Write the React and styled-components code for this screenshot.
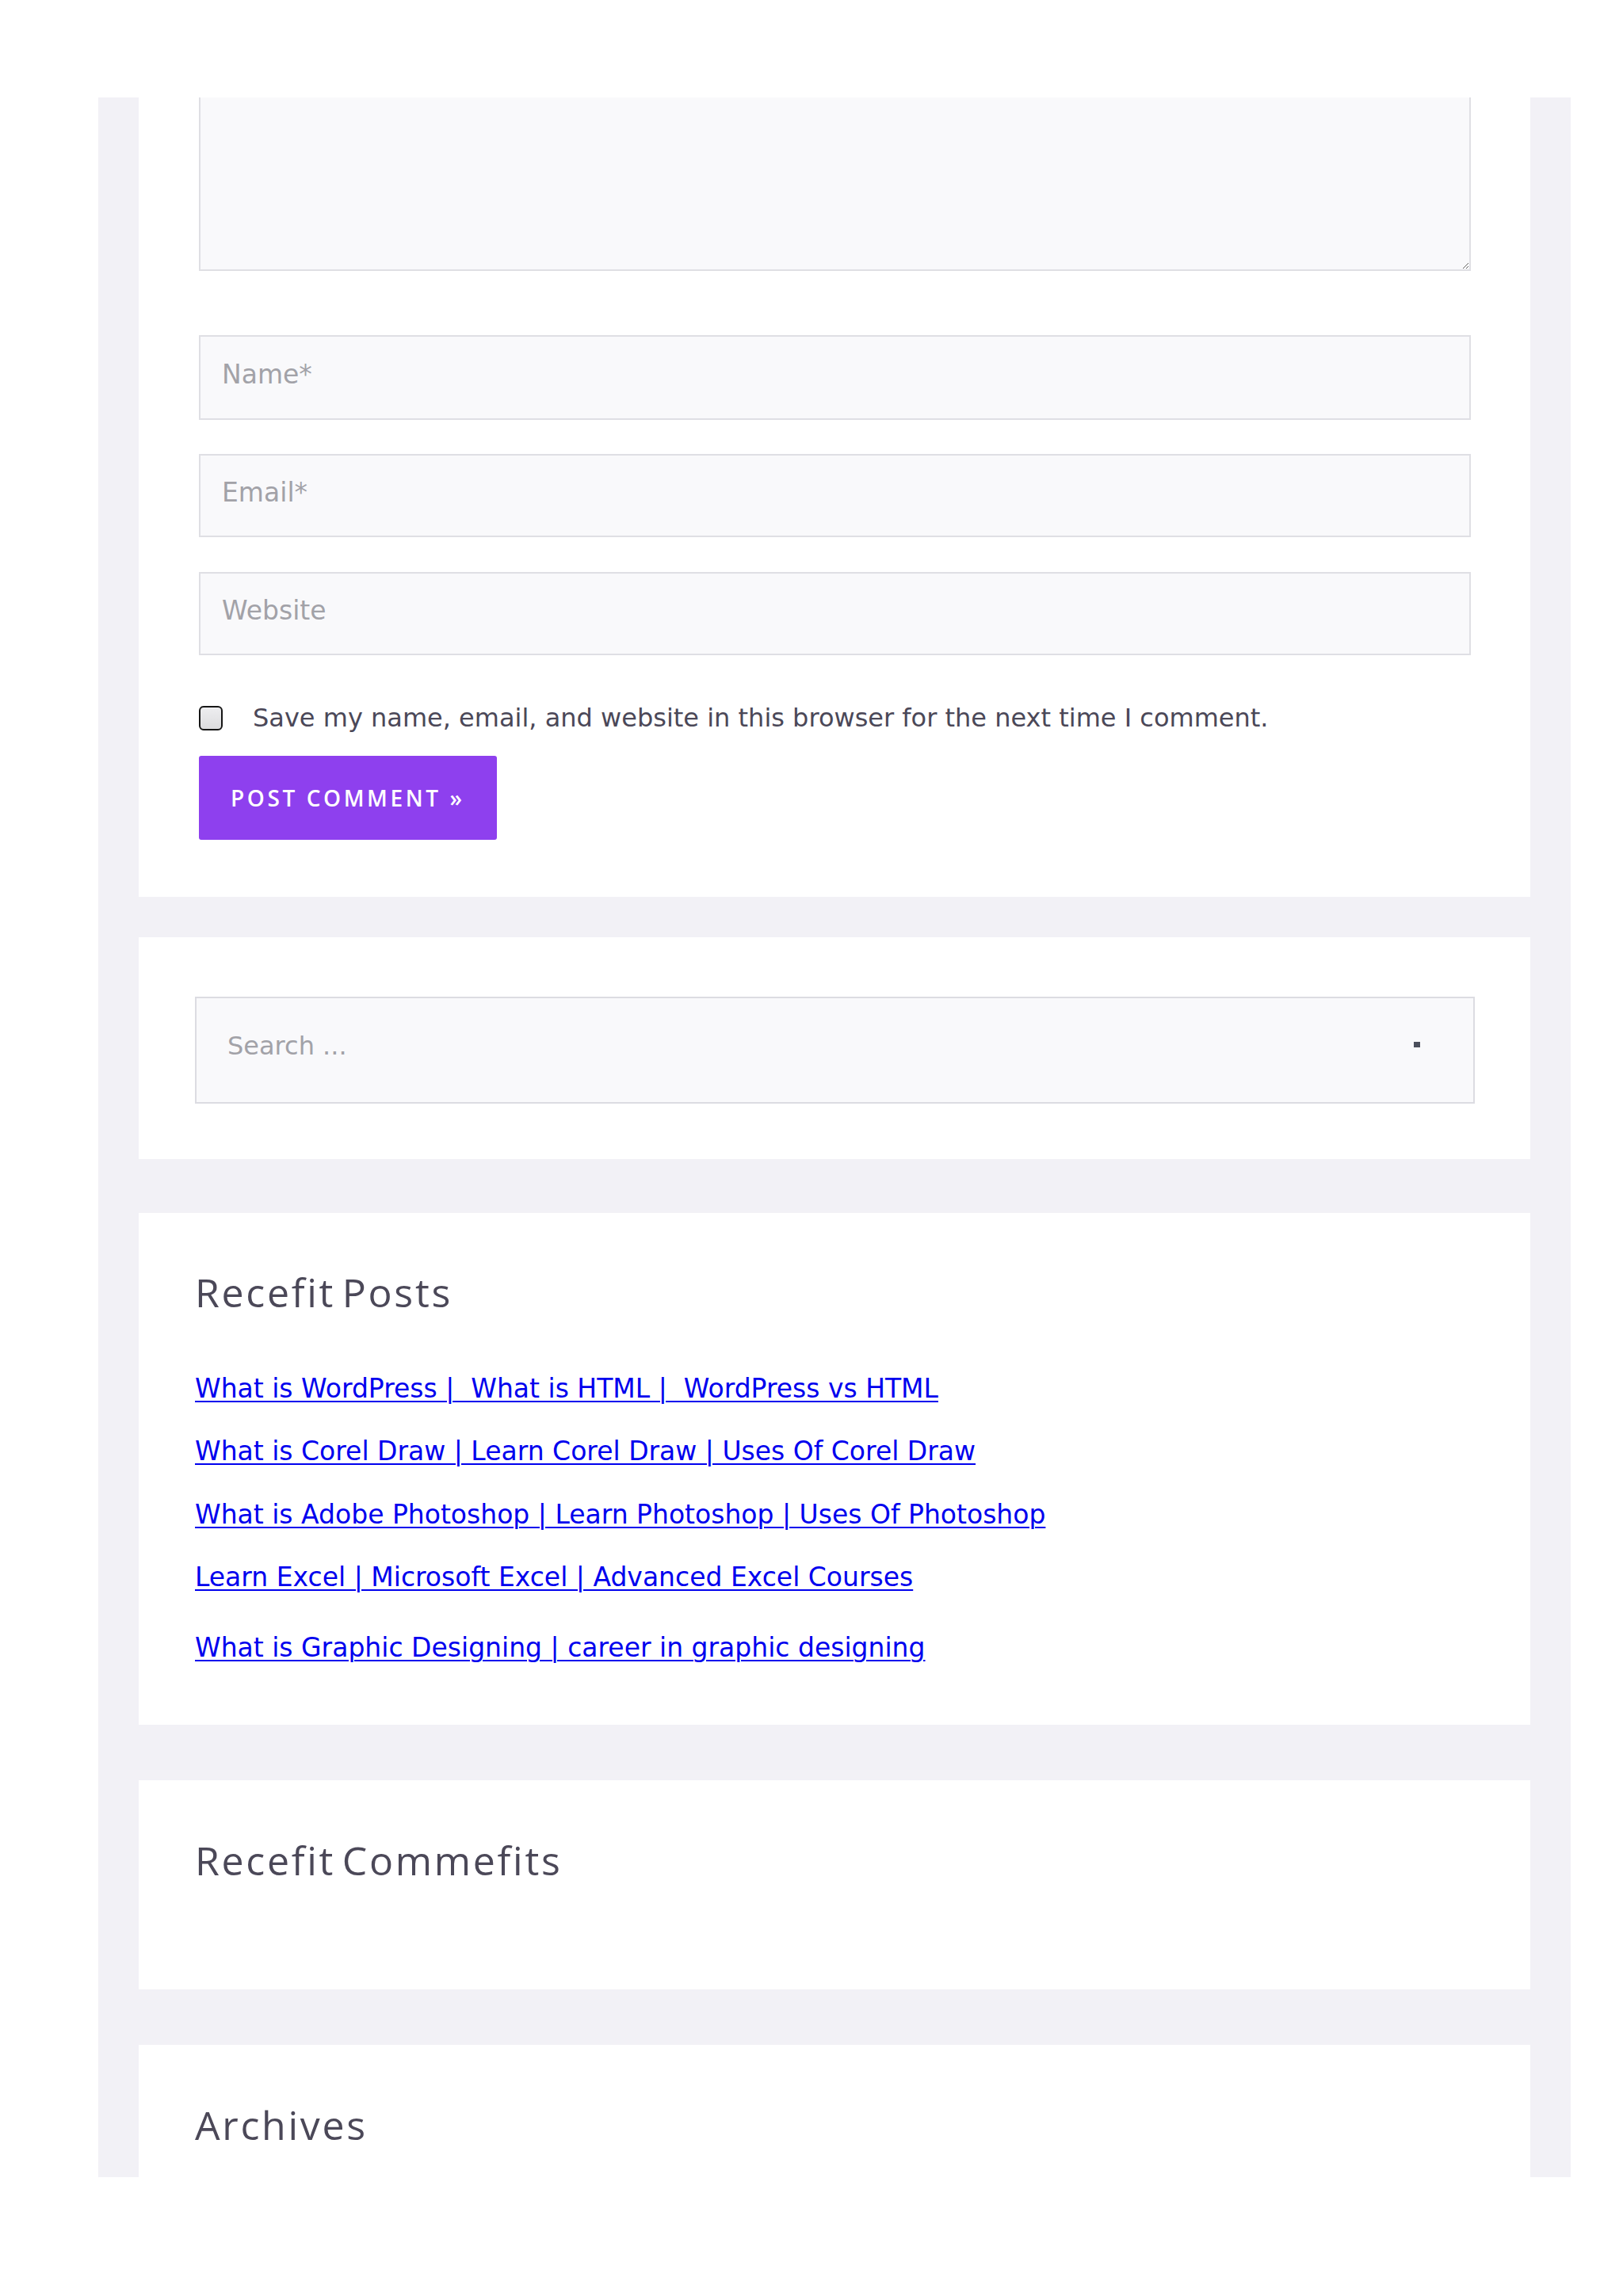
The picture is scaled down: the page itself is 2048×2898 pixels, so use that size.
import React from "react";
import styled, { createGlobalStyle } from "styled-components";

const Global = createGlobalStyle`
  html, body { margin: 0; padding: 0; background: #ffffff; }
  body { font-family: "DejaVu Sans", Verdana, sans-serif; }
  * { box-sizing: border-box; }
`;

const TopSpace = styled.div`
  height: 123px;
  background: #ffffff;
`;

const Band = styled.div`
  margin-left: 124px;
  width: 1858px;
  height: 2625px;
  overflow: hidden;
  background: #f2f1f6;
  padding: 0 51px;
  display: flex;
  flex-direction: column;
`;

const Card = styled.section`
  background: #ffffff;
  padding: ${(p) => p.$pad || "71px 71px 70px"};
  margin-top: ${(p) => p.$gap || 0}px;
  flex-shrink: 0;
`;

const FormStack = styled.form`
  display: flex;
  flex-direction: column;
`;

const TextArea = styled.textarea`
  display: block;
  width: 100%;
  height: 219px;
  background: #f9f9fb;
  border: 2px solid #dfdfe4;
  border-top: none;
  resize: vertical;
  font-family: inherit;
  font-size: 32px;
  margin: 0 0 81px;
`;

const Field = styled.input`
  display: block;
  width: 100%;
  height: ${(p) => p.$h || 106}px;
  margin-bottom: ${(p) => p.$mb || 0}px;
  background: #f9f9fb;
  border: 2px solid #dfdfe4;
  padding: 0 27px 9px;
  font-family: "DejaVu Sans", Verdana, sans-serif;
  font-size: 33px;
  color: #4b4858;
  outline: none;
  &::placeholder { color: #a2a2a8; }
`;

const ConsentRow = styled.label`
  display: flex;
  align-items: center;
  margin-top: 59px;
  gap: 38px;
  font-size: 32px;
  color: #4b4858;
  line-height: 40px;
`;

const Check = styled.span`
  width: 30px;
  height: 31px;
  border: 2px solid #161616;
  border-radius: 6px;
  background: linear-gradient(#eeeef0, #dcdcde);
  flex-shrink: 0;
`;

const Submit = styled.button`
  align-self: flex-start;
  margin-top: 28px;
  width: 376px;
  height: 106px;
  border: none;
  border-radius: 3px;
  background: #8e40ee;
  color: #ffffff;
  font-family: "Open Sans", sans-serif;
  font-weight: 600;
  font-size: 28px;
  letter-spacing: 3.6px;
  text-transform: uppercase;
  text-align: left;
  padding: 0 0 0 40px;
`;

const SearchForm = styled.form`
  display: flex;
  align-items: center;
  height: 135px;
  background: #f9f9fb;
  border: 2px solid #dcdce2;
`;

const SearchInput = styled.input`
  flex: 1;
  height: 100%;
  border: none;
  background: transparent;
  padding: 0 0 12px 39px;
  font-family: "DejaVu Sans", Verdana, sans-serif;
  font-size: 32px;
  outline: none;
  &::placeholder { color: #a2a2a8; }
`;

const SearchButton = styled.button`
  width: 142px;
  height: 100%;
  border: none;
  background: transparent;
  display: flex;
  align-items: center;
  justify-content: center;
  padding: 0;
`;

const Dot = styled.span`
  display: block;
  width: 8px;
  height: 7px;
  background: #4b4f5c;
  margin-top: -14px;
`;

const Heading = styled.h2`
  margin: 0 0 62px;
  font-family: "Open Sans", sans-serif;
  font-weight: 400;
  font-size: 50px;
  line-height: 60px;
  letter-spacing: 2.7px;
  word-spacing: -7px;
  color: #4b4858;
`;

const PostList = styled.ul`
  list-style: none;
  margin: 0;
  padding: 0;
  display: flex;
  flex-direction: column;
`;

const PostItem = styled.li`
  line-height: 60px;
  font-size: 33px;
  margin-top: ${(p) => p.$mt}px;
`;

const PostLink = styled.a`
  color: #0000ee;
  text-decoration: underline;
  text-underline-offset: 4px;
  text-decoration-thickness: 2px;
`;

const posts = [
  { t: "What is WordPress |\u00a0 What is HTML |\u00a0 WordPress vs HTML", mt: 0 },
  { t: "What is Corel Draw | Learn Corel Draw | Uses Of Corel Draw", mt: 19 },
  { t: "What is Adobe Photoshop | Learn Photoshop | Uses Of Photoshop", mt: 20 },
  { t: "Learn Excel | Microsoft Excel | Advanced Excel Courses", mt: 19 },
  { t: "What is Graphic Designing | career in graphic designing", mt: 29 },
];

export default function App() {
  return (
    <>
      <Global />
      <TopSpace />
      <Band>
        <Card $pad="0 75px 72px 76px">
          <FormStack onSubmit={(e) => e.preventDefault()}>
            <TextArea aria-label="Comment" />
            <Field placeholder="Name*" $h={107} $mb={43} />
            <Field placeholder="Email*" $h={105} $mb={44} />
            <Field placeholder="Website" $h={105} />
            <ConsentRow>
              <Check />
              Save my name, email, and website in this browser for the next time I comment.
            </ConsentRow>
            <Submit type="submit">Post Comment »</Submit>
          </FormStack>
        </Card>

        <Card $gap={51} $pad="75px 70px 70px 71px">
          <SearchForm onSubmit={(e) => e.preventDefault()}>
            <SearchInput placeholder="Search ..." />
            <SearchButton type="submit" aria-label="Search">
              <Dot />
            </SearchButton>
          </SearchForm>
        </Card>

        <Card $gap={68} $pad="70px 71px 67px">
          <Heading>Recefit Posts</Heading>
          <PostList>
            {posts.map((p) => (
              <PostItem key={p.t} $mt={p.mt}>
                <PostLink href="#">{p.t}</PostLink>
              </PostItem>
            ))}
          </PostList>
        </Card>

        <Card $gap={70} $pad="71px 71px 71px">
          <Heading>Recefit Commefits</Heading>
        </Card>

        <Card $gap={70} $pad="71px 71px 71px">
          <Heading>Archives</Heading>
        </Card>
      </Band>
    </>
  );
}
